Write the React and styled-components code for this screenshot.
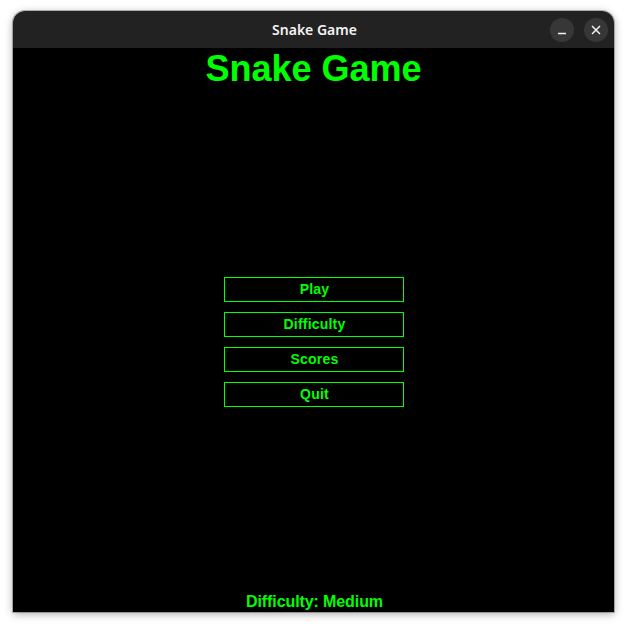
import styled, { createGlobalStyle } from "styled-components";

const GlobalStyle = createGlobalStyle`
    html, body {
        margin: 0;
        padding: 0;
        background: #ffffff;
    }
`;

const Desktop = styled.div`
    width: 628px;
    height: 629px;
    padding: 11px 0 0 13px;
    box-sizing: border-box;
`;

const Window = styled.div`
    width: 601px;
    display: flex;
    flex-direction: column;
    border-radius: 12px 12px 0 0;
    overflow: hidden;
    box-shadow: 0 2px 8px rgba(0, 0, 0, 0.35), 0 0 0 1px rgba(0, 0, 0, 0.25);
`;

const TitleBar = styled.div`
    height: 37px;
    background: #222222;
    display: flex;
    align-items: center;
    justify-content: center;
    position: relative;
`;

const TitleText = styled.span`
    font-family: "Noto Sans", "Open Sans", sans-serif;
    font-size: 14px;
    font-weight: 600;
    color: #f2f2f2;
    padding-left: 2px;
`;

const Controls = styled.div`
    position: absolute;
    right: 6px;
    top: 7px;
    display: flex;
    gap: 10px;
`;

const ControlButton = styled.div`
    width: 24px;
    height: 24px;
    border-radius: 50%;
    background: #373737;
    display: flex;
    align-items: center;
    justify-content: center;
`;

const Board = styled.div`
    height: 564px;
    background: #000000;
    display: flex;
    flex-direction: column;
    align-items: center;
    font-family: "Liberation Sans", Arial, sans-serif;
    color: #00ff00;
`;

const Heading = styled.h1`
    margin: 0;
    padding-top: 3px;
    font-size: 36px;
    line-height: 36px;
    font-weight: bold;
`;

const Menu = styled.div`
    margin-top: 190px;
    display: flex;
    flex-direction: column;
    gap: 10px;
`;

const MenuButton = styled.button`
    width: 180px;
    height: 25px;
    box-sizing: border-box;
    border: 1px solid #00ff00;
    background: #000000;
    color: #00ff00;
    font-family: "Liberation Sans", Arial, sans-serif;
    font-size: 14px;
    font-weight: bold;
    letter-spacing: 0.2px;
    padding: 0 0 1px 2px;
    display: flex;
    align-items: center;
    justify-content: center;
    cursor: pointer;
`;

const Status = styled.div`
    margin-top: auto;
    padding: 0 0 2px 2px;
    font-size: 16px;
    line-height: 16px;
    font-weight: bold;
    letter-spacing: -0.1px;
`;

const items = ["Play", "Difficulty", "Scores", "Quit"];

export default function App() {
    return (
        <>
            <GlobalStyle />
            <Desktop>
                <Window>
                    <TitleBar>
                        <TitleText>Snake Game</TitleText>
                        <Controls>
                            <ControlButton>
                                <svg width="10" height="10" viewBox="0 0 10 10">
                                    <path d="M1 8.5h8" stroke="#f2f2f2" strokeWidth="1.5" />
                                </svg>
                            </ControlButton>
                            <ControlButton>
                                <svg width="10" height="10" viewBox="0 0 10 10">
                                    <path d="M1 1l8 8M9 1l-8 8" stroke="#f2f2f2" strokeWidth="1.5" />
                                </svg>
                            </ControlButton>
                        </Controls>
                    </TitleBar>
                    <Board>
                        <Heading>Snake Game</Heading>
                        <Menu>
                            {items.map((label) => (
                                <MenuButton key={label}>{label}</MenuButton>
                            ))}
                        </Menu>
                        <Status>Difficulty: Medium</Status>
                    </Board>
                </Window>
            </Desktop>
        </>
    );
}
